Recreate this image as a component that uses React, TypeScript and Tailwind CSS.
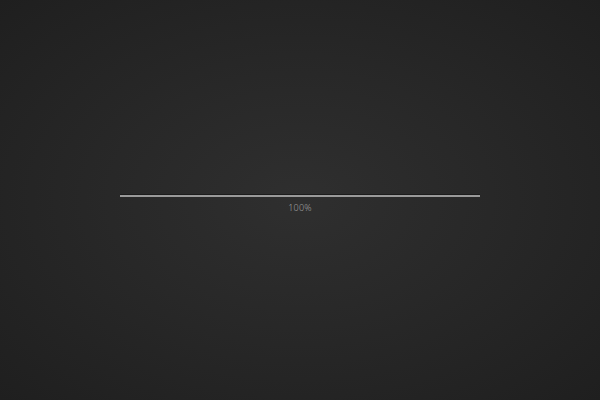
export default function App() {
  const progress = 100

  return (
    <div className="flex h-[400px] w-[600px] flex-col items-center bg-[radial-gradient(ellipse_at_center,#2f2f2f_0%,#282828_45%,#1f1f1f_100%)] font-['Open_Sans',sans-serif]">
      <div className="mt-[194px] w-[360px]">
        {/* track */}
        <div className="h-[3px] w-full border-t border-[#1c1c1c] bg-[#3a3a3a]">
          <div
            className="h-[2px] bg-[#9a9a9a]"
            style={{ width: `${progress}%` }}
          />
        </div>
        <div className="mt-[5px] text-center text-[9px] leading-[12px] font-light tracking-[0.02em] text-[#b4b4b4]">
          {progress}%
        </div>
      </div>
    </div>
  )
}
